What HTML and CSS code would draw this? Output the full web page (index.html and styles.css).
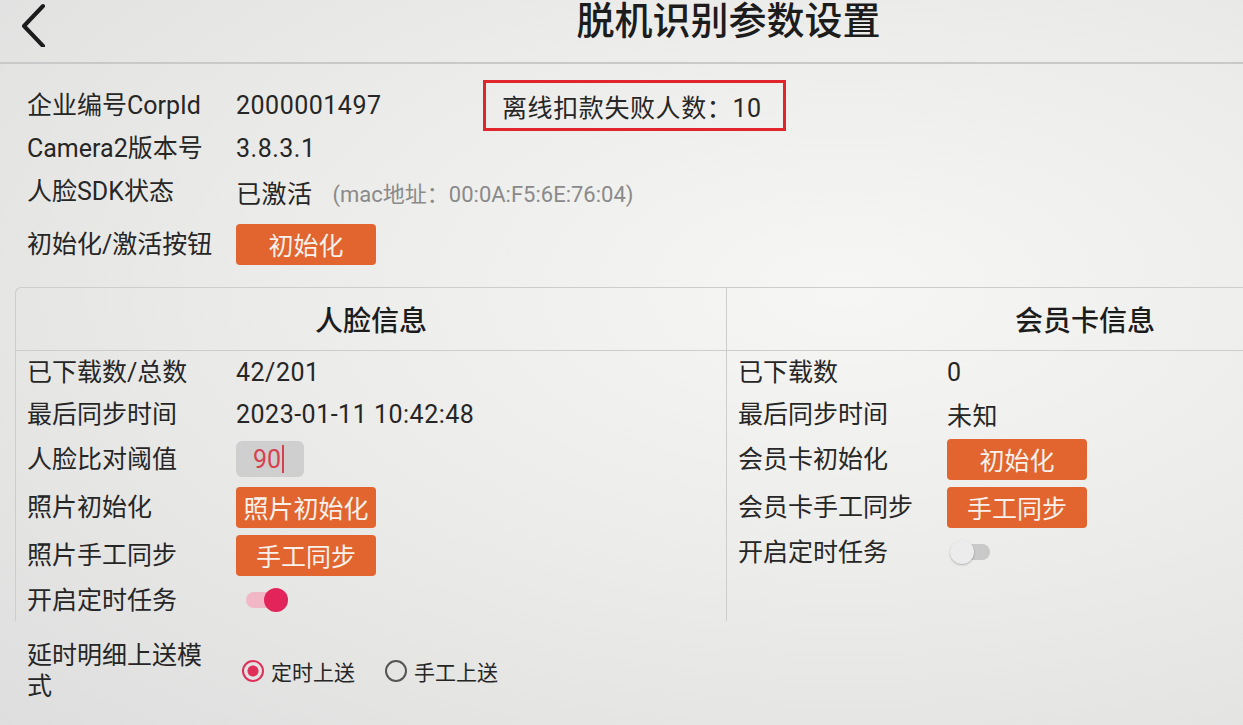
FILE: index.html
```html
<!DOCTYPE html>
<html lang="zh-CN">
<head>
    <meta charset="UTF-8">
    <meta name="viewport" content="width=device-width, initial-scale=1.0">
    <title>脱机识别参数设置</title>
    <link rel="stylesheet" href="styles.css">
</head>
<body>
    <div class="header">
        <svg class="back" width="30" height="44" viewBox="0 0 30 44">
            <path d="M25 3 L6 23 L25 43" fill="none" stroke="#1c1c1c" stroke-width="4" stroke-linecap="round" stroke-linejoin="round"/>
        </svg>
        <h1 class="title">脱机识别参数设置</h1>
    </div>

    <div class="info">
        <div class="row">
            <span class="label">企业编号CorpId</span>
            <span class="value corp">2000001497</span>
            <span class="notice">离线扣款失败人数：10</span>
        </div>
        <div class="row">
            <span class="label">Camera2版本号</span>
            <span class="value">3.8.3.1</span>
        </div>
        <div class="row">
            <span class="label">人脸SDK状态</span>
            <span class="value">已激活</span>
            <span class="mac">(mac地址：00:0A:F5:6E:76:04)</span>
        </div>
        <div class="row row-btn">
            <span class="label">初始化/激活按钮</span>
            <button class="btn">初始化</button>
        </div>
    </div>

    <div class="panel">
        <div class="col col-left">
            <div class="col-head">人脸信息</div>
            <div class="prow">
                <span class="label">已下载数/总数</span>
                <span class="value">42/201</span>
            </div>
            <div class="prow">
                <span class="label">最后同步时间</span>
                <span class="value">2023-01-11 10:42:48</span>
            </div>
            <div class="prow tall">
                <span class="label">人脸比对阈值</span>
                <span class="field">90<i class="caret"></i></span>
            </div>
            <div class="prow tall">
                <span class="label">照片初始化</span>
                <button class="btn">照片初始化</button>
            </div>
            <div class="prow tall">
                <span class="label">照片手工同步</span>
                <button class="btn">手工同步</button>
            </div>
            <div class="prow">
                <span class="label">开启定时任务</span>
                <span class="switch on"><i></i></span>
            </div>
        </div>
        <div class="col col-right">
            <div class="col-head">会员卡信息</div>
            <div class="prow">
                <span class="label">已下载数</span>
                <span class="value">0</span>
            </div>
            <div class="prow">
                <span class="label">最后同步时间</span>
                <span class="value">未知</span>
            </div>
            <div class="prow tall">
                <span class="label">会员卡初始化</span>
                <button class="btn">初始化</button>
            </div>
            <div class="prow tall">
                <span class="label">会员卡手工同步</span>
                <button class="btn">手工同步</button>
            </div>
            <div class="prow">
                <span class="label">开启定时任务</span>
                <span class="switch"><i></i></span>
            </div>
        </div>
    </div>

    <div class="upload">
        <span class="label">延时明细上送模式</span>
        <label class="radio checked"><i></i>定时上送</label>
        <label class="radio"><i></i>手工上送</label>
    </div>
</body>
</html>
```

FILE: styles.css
```css
html, body {
    overflow: hidden;
}
body {
    margin: 0;
    width: 1243px;
    height: 725px;
    font-family: Roboto, "Noto Sans CJK SC", sans-serif;
    font-size: 25px;
    color: #262626;
    background: radial-gradient(ellipse at 68% 40%, #f6f6f4 0%, #ececea 45%, #dedede 100%);
}
.header {
    display: flex;
    align-items: flex-start;
    height: 62px;
    padding-left: 18px;
    border-bottom: 2px solid #c9c9c9;
}
.back {
    margin-top: 3px;
    flex: none;
}
.title {
    flex: 1;
    margin: 0;
    padding-left: 166px;
    text-align: center;
    font-size: 38px;
    font-weight: 500;
    line-height: 42px;
    color: #1c1c1c;
}
.info {
    padding: 20px 0 0 27px;
}
.row {
    display: flex;
    align-items: center;
    height: 43px;
}
.row-btn {
    height: 44px;
    margin-top: 9px;
}
.label {
    width: 209px;
    padding-right: 19px;
    box-sizing: border-box;
    flex: none;
    line-height: 31px;
}
.value {
    white-space: nowrap;
    letter-spacing: 0.5px;
}
.corp {
    width: 247px;
}
.notice {
    width: 303px;
    height: 51px;
    box-sizing: border-box;
    border: 3px solid #e0262b;
    padding-left: 16px;
    display: flex;
    align-items: center;
    letter-spacing: 0.6px;
}
.mac {
    margin-left: 20px;
    font-size: 22px;
    color: #8a8a8a;
}
.btn {
    width: 140px;
    height: 41px;
    border: none;
    border-radius: 4px;
    background: #e2642e;
    color: #fbf1ec;
    font-family: inherit;
    font-size: 25px;
    padding: 0;
}
.panel {
    display: flex;
    margin: 21px 0 0 15px;
    border: 1px solid #cdcdcd;
    border-right: none;
    border-bottom: none;
    border-radius: 6px 0 0 0;
}
.col-left {
    width: 710px;
    border-right: 1px solid #cdcdcd;
}
.col-right {
    flex: 1;
}
.col-head {
    height: 62px;
    border-bottom: 1px solid #cdcdcd;
    display: flex;
    align-items: center;
    justify-content: center;
    font-size: 28px;
    font-weight: 500;
    color: #1c1c1c;
}
.col-right .col-head {
    padding-left: 200px;
}
.prow {
    display: flex;
    align-items: center;
    height: 42px;
    padding-left: 11px;
}
.prow.tall {
    height: 48px;
}
.field {
    width: 68px;
    height: 36px;
    box-sizing: border-box;
    padding-left: 17px;
    border-radius: 6px;
    background: #cfcfcf;
    color: #d6414f;
    display: flex;
    align-items: center;
}
.caret {
    width: 2px;
    height: 28px;
    margin-left: 1px;
    background: #d6414f;
}
.switch {
    position: relative;
    width: 38px;
    height: 16px;
    margin-left: 5px;
    border-radius: 8px;
    background: #c9c9c9;
}
.switch i {
    position: absolute;
    top: -4px;
    left: -2px;
    width: 24px;
    height: 24px;
    border-radius: 50%;
    background: #ececec;
    box-shadow: 0 1px 2px rgba(0, 0, 0, 0.25);
}
.switch.on {
    background: #f2b7c6;
    margin-left: 10px;
}
.switch.on i {
    left: auto;
    right: -4px;
    background: #e3245a;
    box-shadow: none;
}
.upload {
    display: flex;
    align-items: center;
    padding: 19px 0 0 27px;
}
.radio {
    display: flex;
    align-items: center;
    font-size: 21px;
    margin-right: 30px;
    margin-left: 6px;
}
.radio + .radio {
    margin-left: 0;
}
.radio i {
    width: 22px;
    height: 22px;
    box-sizing: border-box;
    border: 2px solid #555;
    border-radius: 50%;
    margin-right: 7px;
}
.radio.checked i {
    border-color: #e0305a;
    background: radial-gradient(circle, #e0305a 0 5px, transparent 6px);
}
```
